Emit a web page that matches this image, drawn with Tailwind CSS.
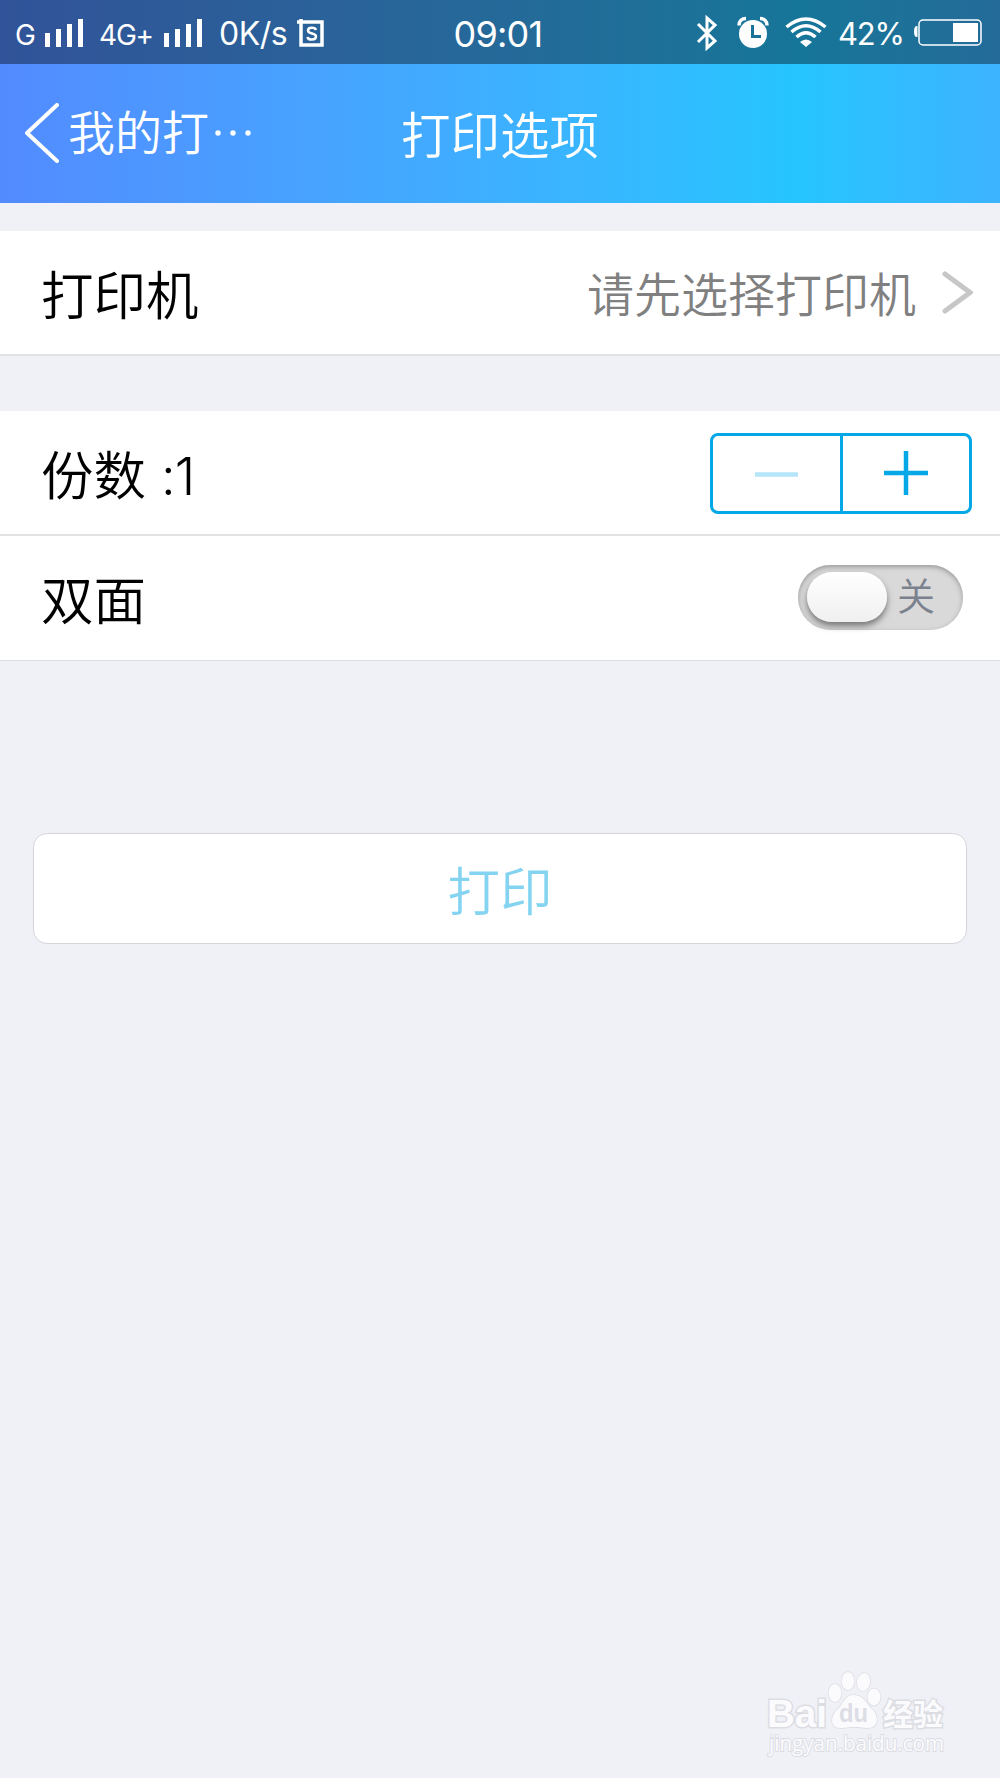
<!DOCTYPE html>
<html lang="zh-CN">
  <head>
    <meta charset="UTF-8">
    <meta name="viewport" content="width=device-width, initial-scale=1.0">
    <title>打印选项</title>
    <script src="https://cdn.jsdelivr.net/npm/@tailwindcss/browser@4"></script>
  </head>
  <body class="bg-[#f0f1f7] font-['Noto_Sans_CJK_SC',sans-serif] font-[350] text-black">
    <div class="relative flex h-[1778px] w-[1000px] flex-col overflow-hidden">
      <div class="bg-linear-to-r from-[#528bff] from-0% via-[#25c5ff] via-80% to-[#3cb3ff] to-100% text-white">
        <!-- Status bar -->
        <div class="grid h-16 grid-cols-[1fr_auto_1fr] items-center bg-black/40 font-[Inter,sans-serif] font-normal whitespace-nowrap">
          <div class="flex items-center pl-[15px]">
            <span class="w-[30px] shrink-0 pt-[5px] text-[28px] leading-8 tracking-tight">G</span>
            <svg class="mt-px h-7 w-10 shrink-0" viewBox="0 0 40 28" fill="currentColor">
              <path d="M0 14h5v14H0zM11 10h5v18h-5zM22 5h5v23h-5zM33 0h5v28h-5z"/>
            </svg>
            <span class="w-[65px] shrink-0 pt-[5px] pl-3.5 text-[28px] leading-8 tracking-[-1.200px]">4G+</span>
            <svg class="mt-px ml-[14px] h-7 w-10 shrink-0" viewBox="0 0 40 28" fill="currentColor">
              <path d="M0 14h5v14H0zM11 10h5v18h-5zM22 5h5v23h-5zM33 0h5v28h-5z"/>
            </svg>
            <span class="w-[92px] shrink-0 pt-[4px] pl-[15px] text-[32px] leading-8 tracking-[-0.500px]">0K/s</span>
            <svg class="mt-px ml-px h-[30px] w-7 shrink-0" viewBox="0 0 28 30" fill="none" stroke="currentColor">
              <path d="M4 4h21v23H4zM0 4h6M4 1v4" stroke-width="3.500"/>
              <path d="M19 12c-1-3-8-3-8 .5 0 4 8 2 8 6 0 4-8 4-8.500 .5" stroke-width="2.500"/>
            </svg>
          </div>
          <span class="pt-[3px] pr-1 text-[36px] leading-9 tracking-[-0.800px]">09:01</span>
          <div class="flex items-center justify-end pr-[18px]">
            <svg class="mt-0.5 h-9 w-[22px] shrink-0" viewBox="0 0 22 36" fill="none" stroke="currentColor" stroke-width="3">
              <path d="M2 9l17 17-8 7V3l8 7L2 27"/>
            </svg>
            <svg class="ml-[19px] h-8 w-8 shrink-0" viewBox="0 0 32 32">
              <circle cx="16" cy="18" r="14" fill="currentColor"/>
              <path d="M2 9.500c0-4.500 3-7 7-7M30 9.500c0-4.500-3-7-7-7" fill="none" stroke="currentColor" stroke-width="3.500"/>
              <path d="M15.500 9v11.500H24" fill="none" stroke="#1a7298" stroke-width="3"/>
            </svg>
            <svg class="ml-4 h-[30px] w-[42px] shrink-0" viewBox="0 0 42 30" fill="none" stroke="currentColor" stroke-width="3.500">
              <path d="M1.500 10Q21-6 40.500 10M6.500 15Q21 2.500 35.500 15M11.500 20Q21 11.500 30.500 20"/>
              <path d="M15 25q6-5 12 0l-6 5z" fill="currentColor" stroke="none"/>
            </svg>
            <span class="w-[86px] shrink-0 pt-[4px] pl-[11px] text-[31px] leading-8 tracking-[-1.200px]">42%</span>
            <svg class="h-7 w-[69px] shrink-0" viewBox="0 0 69 28" fill="none" stroke="currentColor">
              <rect x="6" y="2" width="62" height="25" rx="4" stroke-width="1.500"/>
              <path d="M40 5h25v19H40zM4.500 8H4q-3 0-3 5.500T4 19h.5z" fill="currentColor" stroke="none"/>
            </svg>
          </div>
        </div>
        <!-- Title bar -->
        <div class="grid h-[139px] grid-cols-[1fr_auto_1fr] items-center whitespace-nowrap">
          <div class="flex items-center pb-px pl-[25px]">
            <svg class="h-[60px] w-[35px]" viewBox="0 0 35 60" fill="none" stroke="currentColor" stroke-width="4" stroke-linecap="round" stroke-linejoin="round">
              <path d="M32 2L2 30l30 28"/>
            </svg>
            <span class="-mt-1.5 ml-2 text-[47px] leading-[60px]">我的打</span>
            <svg class="ml-1.5 h-1.5 w-9" viewBox="0 0 36 6" fill="currentColor">
              <circle cx="3" cy="3" r="2.700"/>
              <circle cx="18" cy="3" r="2.700"/>
              <circle cx="33" cy="3" r="2.700"/>
            </svg>
          </div>
          <h1 class="-mt-0.5 text-[49.500px] leading-[60px]">打印选项</h1>
        </div>
      </div>

      <!-- Printer -->
      <div class="mt-7 flex h-[125px] items-center justify-between border-b-2 border-[#e2e3e6] bg-white pr-[27px] pl-[41px]">
        <span class="-mt-0.5 text-[52.500px] leading-[60px]">打印机</span>
        <div class="flex items-center text-[#808080]">
          <span class="-mt-0.5 text-[47px] leading-[60px]">请先选择打印机</span>
          <svg class="ml-[26px] h-[43px] w-[31px]" viewBox="0 0 31 43" fill="none" stroke="#c7c7c7" stroke-width="5" stroke-linecap="round">
            <path d="M3 3l25 18.500L3 40"/>
          </svg>
        </div>
      </div>

      <!-- Copies -->
      <div class="mt-[55px] flex h-[125px] items-center justify-between border-b-2 border-[#e2e2e4] bg-white pr-7 pl-[41px]">
        <span class="mt-1 flex items-baseline text-[52.500px] leading-[60px]">份数<span class="ml-[15px] font-[Inter,sans-serif] text-[52px] font-[350] tracking-[-1px]">:1</span></span>
        <div class="mt-0.5 flex h-[81px] w-[262px] rounded-lg border-3 border-[#05a8e6] text-[#05a8e6]">
          <button class="flex flex-1 items-center justify-center border-r-3 border-[#05a8e6]">
            <svg class="h-11 w-11 text-[#b4e5f8]" viewBox="0 0 44 44" stroke="currentColor" stroke-width="4.500">
              <path d="M1 22.500h43"/>
            </svg>
          </button>
          <button class="flex flex-1 items-center justify-center">
            <svg class="-mt-0.5 h-11 w-11" viewBox="0 0 44 44" stroke="currentColor" stroke-width="4.500">
              <path d="M0 22h44M22 0v44"/>
            </svg>
          </button>
        </div>
      </div>

      <!-- Duplex -->
      <div class="flex h-[125px] items-center justify-between border-b border-[#dcdde0] bg-white pr-[37px] pl-[41px]">
        <span class="-mt-0.5 text-[52.500px] leading-[60px]">双面</span>
        <div class="-mt-0.5 flex h-[65px] w-[165px] items-center rounded-full bg-[#d9d9d9] pl-[9px] shadow-[inset_0_2px_5px_#999]">
          <div class="h-[50px] w-20 rounded-full bg-linear-to-b from-white to-[#f0f0f0] shadow-[0_4px_6px_#777]"></div>
          <span class="-mt-1.5 ml-2.5 text-[38px] leading-10 text-[#7b828e]">关</span>
        </div>
      </div>

      <button class="mx-[33px] mt-[172px] h-[111px] rounded-[14px] border border-[#d5d6da] bg-white pb-0.5 text-[52.500px] leading-[60px] text-[#84d4f1]">打印</button>

      <!-- Watermark -->
      <div class="absolute top-[1670px] left-[766px] w-[182px] font-['Liberation_Sans',sans-serif]">
        <svg class="h-[92px] w-[182px]" viewBox="0 0 182 92" fill="#fbfbfe" stroke="#dcdde2" stroke-width="1.500" paint-order="stroke">
          <text x="1" y="57" font-size="38" font-weight="700" stroke-width="3" textLength="60" lengthAdjust="spacingAndGlyphs">Bai</text>
          <ellipse cx="69" cy="23" rx="6.500" ry="9"/>
          <ellipse cx="82" cy="11" rx="6.500" ry="9"/>
          <ellipse cx="97.500" cy="12" rx="6.500" ry="9" transform="rotate(10 97.500 12)"/>
          <ellipse cx="108" cy="27" rx="6.500" ry="8.500"/>
          <path d="M88 25c-10 0-10 9-17 15-6 5-8 18 3 18 6 0 8-1 14-1s8 1 14 1c11 0 11-13 4-19-6-5-8-14-18-14z"/>
          <text x="73" y="52" font-size="25" font-weight="700" fill="#dcdde5" stroke="none" textLength="29" lengthAdjust="spacingAndGlyphs">du</text>
          <text x="117" y="55" font-size="30" font-weight="700" stroke-width="3" font-family="Noto Sans CJK SC, sans-serif">经验</text>
          <text x="3" y="81" font-size="21" font-weight="500" font-family="Open Sans, sans-serif" stroke-width="2" textLength="175" lengthAdjust="spacingAndGlyphs">jingyan.baidu.com</text>
        </svg>
      </div>
    </div>
  </body>
</html>
